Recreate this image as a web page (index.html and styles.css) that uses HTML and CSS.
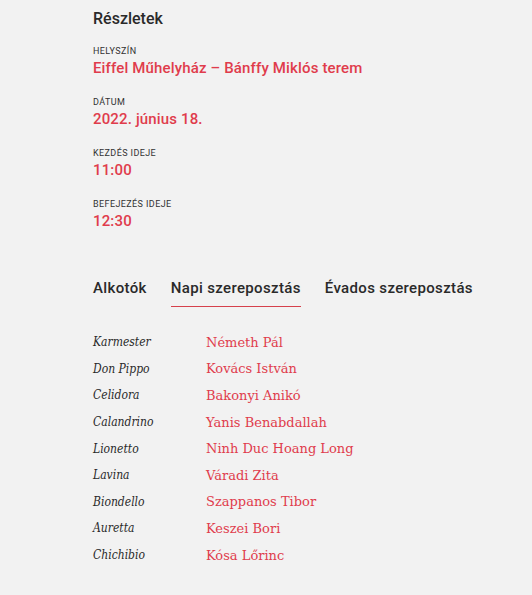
FILE: index.html
```html
<!DOCTYPE html>
<html lang="hu">
<head>
<meta charset="utf-8">
<link rel="stylesheet" href="styles.css">
</head>
<body>
<main class="page">
  <section class="details">
    <h2 class="title">Részletek</h2>
    <div class="item">
      <div class="label">Helyszín</div>
      <div class="value">Eiffel Műhelyház – Bánffy Miklós terem</div>
    </div>
    <div class="item">
      <div class="label">Dátum</div>
      <div class="value">2022. június 18.</div>
    </div>
    <div class="item">
      <div class="label">Kezdés ideje</div>
      <div class="value">11:00</div>
    </div>
    <div class="item">
      <div class="label">Befejezés ideje</div>
      <div class="value">12:30</div>
    </div>
  </section>
  <nav class="tabs">
    <span class="tab">Alkotók</span>
    <span class="tab active">Napi szereposztás</span>
    <span class="tab">Évados szereposztás</span>
  </nav>
  <dl class="cast">
    <div class="row"><dt>Karmester</dt><dd>Németh Pál</dd></div>
    <div class="row"><dt>Don Pippo</dt><dd>Kovács István</dd></div>
    <div class="row"><dt>Celidora</dt><dd>Bakonyi Anikó</dd></div>
    <div class="row"><dt>Calandrino</dt><dd>Yanis Benabdallah</dd></div>
    <div class="row"><dt>Lionetto</dt><dd>Ninh Duc Hoang Long</dd></div>
    <div class="row"><dt>Lavina</dt><dd>Váradi Zita</dd></div>
    <div class="row"><dt>Biondello</dt><dd>Szappanos Tibor</dd></div>
    <div class="row"><dt>Auretta</dt><dd>Keszei Bori</dd></div>
    <div class="row"><dt>Chichibio</dt><dd>Kósa Lőrinc</dd></div>
  </dl>
</main>
</body>
</html>
```
FILE: styles.css
```css
html, body {
  margin: 0;
  padding: 0;
  background: #f2f2f2;
}
body {
  font-family: Roboto, "Noto Sans", sans-serif;
  color: #262626;
}
.page {
  padding: 9px 0 0 93px;
}
.title {
  margin: 0 0 16px;
  font-size: 16px;
  font-weight: 500;
  line-height: 20px;
  color: #2a2a2a;
}
.item {
  margin-bottom: 18px;
}
.label {
  font-size: 9px;
  line-height: 12px;
  text-transform: uppercase;
  color: #333;
  letter-spacing: 0.4px;
}
.value {
  margin-top: 1px;
  font-size: 15px;
  line-height: 20px;
  font-weight: 500;
  letter-spacing: 0.15px;
  color: #e03c4c;
}
.tabs {
  display: flex;
  gap: 24px;
  margin-top: 47px;
}
.tab {
  font-size: 15px;
  font-weight: 500;
  line-height: 20px;
  letter-spacing: 0.35px;
  padding-bottom: 8px;
  color: #2a2a2a;
  border-bottom: 1px solid transparent;
}
.tab.active {
  border-bottom-color: #d6414c;
}
.cast {
  margin: 22px 0 0;
}
.row {
  display: flex;
  height: 26.6px;
  align-items: center;
}
.row dt {
  width: 113px;
  font-family: "DejaVu Serif", serif;
  font-stretch: condensed;
  font-style: italic;
  font-size: 12px;
  color: #2a2a2a;
}
.row dd {
  margin: 0;
  font-family: "DejaVu Serif", serif;
  font-size: 13px;
  color: #e03c4c;
}
```
